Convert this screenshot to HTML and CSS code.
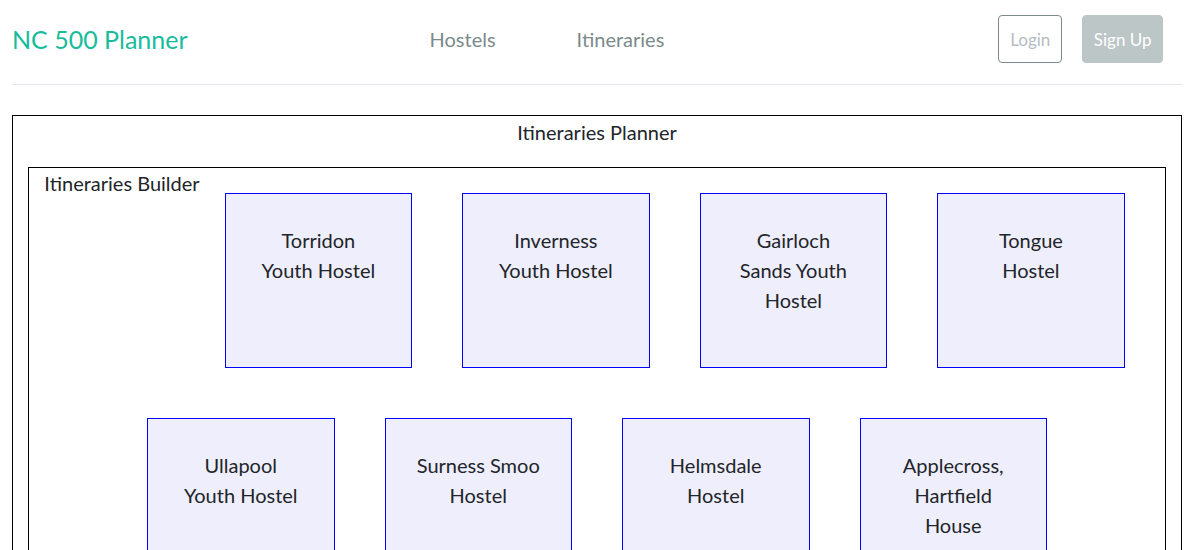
FILE: index.html
```html
<!DOCTYPE html>
<html lang="en">
<head>
<meta charset="utf-8">
<title>NC 500 Planner</title>
<link rel="stylesheet" href="styles.css">
</head>
<body>
<div class="page">
  <header class="navbar">
    <a class="brand" href="#">NC 500 Planner</a>
    <nav class="nav">
      <a class="nav-link" href="#">Hostels</a>
      <a class="nav-link" href="#">Itineraries</a>
    </nav>
    <div class="actions">
      <button class="btn btn-login">Login</button>
      <button class="btn btn-signup">Sign Up</button>
    </div>
  </header>
  <main class="planner">
    <div class="planner-title">Itineraries Planner</div>
    <section class="builder">
      <div class="builder-title">Itineraries Builder</div>
      <div class="hostel">Torridon Youth Hostel</div>
      <div class="hostel">Inverness Youth Hostel</div>
      <div class="hostel">Gairloch Sands Youth Hostel</div>
      <div class="hostel">Tongue Hostel</div>
      <div class="hostel">Ullapool Youth Hostel</div>
      <div class="hostel">Surness Smoo Hostel</div>
      <div class="hostel">Helmsdale Hostel</div>
      <div class="hostel">Applecross, Hartfield House</div>
    </section>
  </main>
</div>
</body>
</html>
```
FILE: styles.css
```css
* { box-sizing: border-box; }
html, body { margin: 0; padding: 0; background: #fff; }
body {
  font-family: Lato, "Noto Sans", sans-serif;
  color: #212529;
  overflow: hidden;
}
.page {
  width: 1170px;
  margin-left: 12px;
}
.navbar {
  display: flex;
  align-items: center;
  padding: 15px 19px 21px 0;
  border-bottom: 1px solid #e3e6ea;
}
.brand {
  font-size: 25px;
  color: #18bc9c;
  text-decoration: none;
  line-height: 30px;
}
.nav {
  display: flex;
  gap: 81px;
  margin-left: 242px;
}
.nav-link {
  font-size: 20px;
  color: #7b8a8b;
  text-decoration: none;
}
.actions {
  margin-left: auto;
  display: flex;
  gap: 20px;
}
.btn {
  font-family: Lato, "Noto Sans", sans-serif;
  font-size: 17px;
  height: 48px;
  padding: 0 11px;
  border-radius: 4px;
  cursor: pointer;
}
.btn-login {
  background: #fff;
  border: 1px solid #7b8a8b;
  color: #b4bcc2;
}
.btn-signup {
  background: #bcc6c6;
  border: 1px solid #bcc6c6;
  color: #fff;
  padding: 0 10.5px;
}
.planner {
  margin-top: 30px;
  border: 1px solid #000;
  padding: 0 15px 15px;
}
.planner-title {
  text-align: center;
  font-size: 20px;
  line-height: 30px;
  padding-top: 1px;
  margin-bottom: 20px;
}
.builder {
  border: 1px solid #000;
  display: flex;
  flex-wrap: wrap;
  justify-content: center;
  align-items: flex-start;
}
.builder-title {
  font-size: 20px;
  line-height: 30px;
}
.hostel {
  width: 187.5px;
  height: 175px;
  margin: 25px;
  padding: 31px 30px 30px;
  border: 1px solid #0000ff;
  background: #eeeefc;
  font-size: 20px;
  line-height: 30px;
  text-align: center;
}
```
